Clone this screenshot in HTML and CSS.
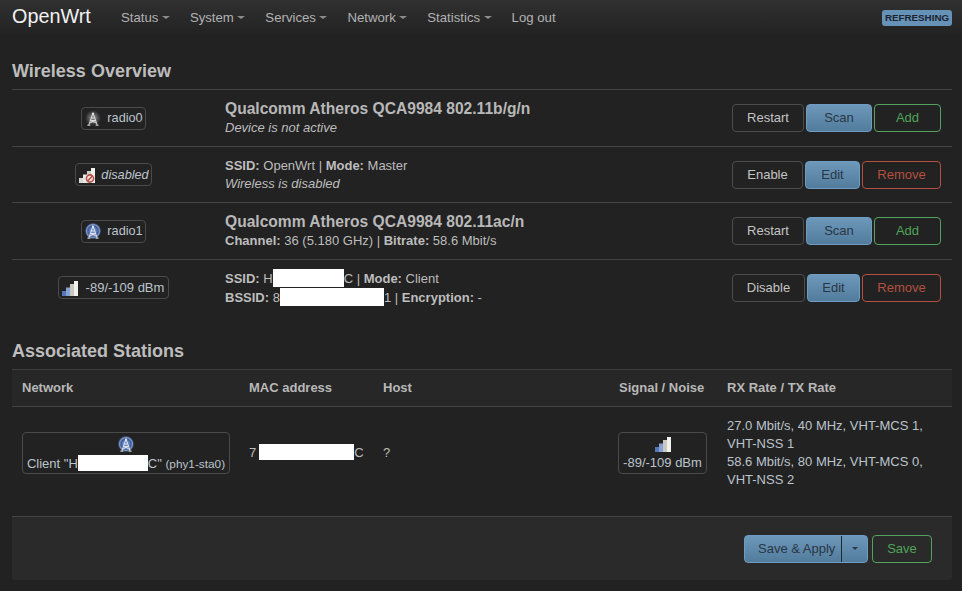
FILE: index.html
```html
<!DOCTYPE html>
<html lang="en">
<head>
<meta charset="utf-8">
<title>Wireless Overview - OpenWrt</title>
<link rel="stylesheet" href="styles.css">
</head>
<body>
<svg class="defs" width="0" height="0" aria-hidden="true">
  <defs>
    <radialGradient id="glowGrey"><stop offset="0.3" stop-color="#7a7a7a"/><stop offset="1" stop-color="#666" stop-opacity="0"/></radialGradient>
    <radialGradient id="glowBlue"><stop offset="0.35" stop-color="#6a8ccc"/><stop offset="0.62" stop-color="#3f5a92"/><stop offset="0.82" stop-color="#7a96cc"/><stop offset="1" stop-color="#4a6090" stop-opacity="0.3"/></radialGradient>
    <g id="tower" fill="none" stroke="#ececec" stroke-width="0.9">
      <path d="M8 3 3.8 15M8 3 12.2 15M6.3 8h3.4M5.6 10.6h4.8M4.8 13 10.4 10.6M11.2 13 5.6 10.6M2.4 15.2h3M10.6 15.2h3"/>
      <circle cx="8" cy="3.6" r="1" fill="#ececec" stroke="none"/>
    </g>
    <g id="bars">
      <rect x="0" y="11" width="4" height="5" fill="#5577b8"/>
      <rect x="4" y="7.5" width="4" height="8.5" fill="#86a2d2"/>
      <rect x="8" y="4" width="4" height="12" fill="#c9c9bf"/>
      <rect x="12" y="1" width="4" height="15" fill="#f2f2ec"/>
    </g>
    <g id="barsOff">
      <rect x="0" y="11" width="4" height="5" fill="#d8d8d2"/>
      <rect x="4" y="7.5" width="4" height="8.5" fill="#e8e8e2"/>
      <rect x="8" y="4" width="4" height="12" fill="#cfcfc8"/>
      <rect x="12" y="1" width="4" height="15" fill="#f2f2ec"/>
    </g>
  </defs>
</svg>
<header class="topbar">
  <a class="brand">OpenWrt</a>
  <nav class="menu">
    <a class="menu-item">Status<i class="caret"></i></a>
    <a class="menu-item">System<i class="caret"></i></a>
    <a class="menu-item">Services<i class="caret"></i></a>
    <a class="menu-item">Network<i class="caret"></i></a>
    <a class="menu-item">Statistics<i class="caret"></i></a>
    <a class="menu-item">Log out</a>
  </nav>
  <span class="refreshing">REFRESHING</span>
</header>
<main class="content">
  <h2 class="title title-first">Wireless Overview</h2>
  <section class="wifi">
    <div class="row">
      <div class="cell-badge"><span class="ifbadge"><svg class="ic" viewBox="0 0 16 16"><circle cx="8" cy="8" r="8" fill="url(#glowGrey)"/><use href="#tower"/></svg>radio0</span></div>
      <div class="cell-info"><div class="dev">Qualcomm Atheros QCA9984 802.11b/g/n</div><em>Device is not active</em></div>
      <div class="cell-act"><button class="btn btn-r1">Restart</button><button class="btn blue btn-s">Scan</button><button class="btn green btn-a">Add</button></div>
    </div>
    <div class="row">
      <div class="cell-badge"><span class="ifbadge"><svg class="ic ic-bars" viewBox="0 0 16 16"><use href="#barsOff"/><circle cx="11" cy="11.5" r="3.6" fill="#efe4e0" stroke="#b8504a" stroke-width="1.6"/><path d="M8.5 14 13.5 9" stroke="#b8504a" stroke-width="1.6"/></svg><em>disabled</em></span></div>
      <div class="cell-info plain"><div><b>SSID:</b> OpenWrt | <b>Mode:</b> Master</div><em>Wireless is disabled</em></div>
      <div class="cell-act"><button class="btn btn-en">Enable</button><button class="btn blue btn-e">Edit</button><button class="btn red btn-rm">Remove</button></div>
    </div>
    <div class="row">
      <div class="cell-badge"><span class="ifbadge"><svg class="ic" viewBox="0 0 16 16"><circle cx="8" cy="8" r="8" fill="url(#glowBlue)"/><use href="#tower"/></svg>radio1</span></div>
      <div class="cell-info"><div class="dev">Qualcomm Atheros QCA9984 802.11ac/n</div><div><b>Channel:</b> 36 (5.180 GHz) | <b>Bitrate:</b> 58.6 Mbit/s</div></div>
      <div class="cell-act"><button class="btn btn-r1">Restart</button><button class="btn blue btn-s">Scan</button><button class="btn green btn-a">Add</button></div>
    </div>
    <div class="row">
      <div class="cell-badge"><span class="ifbadge sigbadge"><svg class="ic ic-bars" viewBox="0 0 16 16"><use href="#bars"/></svg>-89/-109 dBm</span></div>
      <div class="cell-info plain"><div><b>SSID:</b> H<span class="mask m-ssid"></span>C | <b>Mode:</b> Client</div><div><b>BSSID:</b> 8<span class="mask m-bssid"></span>1 | <b>Encryption:</b> -</div></div>
      <div class="cell-act"><button class="btn btn-dis">Disable</button><button class="btn blue btn-e2">Edit</button><button class="btn red btn-rm">Remove</button></div>
    </div>
  </section>
  <h2 class="title title-second">Associated Stations</h2>
  <section class="stations">
    <div class="st-row st-head">
      <div>Network</div><div>MAC address</div><div>Host</div><div>Signal / Noise</div><div>RX Rate / TX Rate</div>
    </div>
    <div class="st-row st-body">
      <div><span class="stack net"><svg class="ic" viewBox="0 0 16 16"><circle cx="8" cy="8" r="8" fill="url(#glowBlue)"/><use href="#tower"/></svg><span class="nowrap">Client "H<span class="mask m-net"></span>C" <small>(phy1-sta0)</small></span></span></div>
      <div>7<span class="mask m-mac"></span>C</div>
      <div>?</div>
      <div class="sig-cell"><span class="stack sig"><svg class="ic" viewBox="0 0 16 16"><use href="#bars"/></svg><span class="nowrap">-89/-109 dBm</span></span></div>
      <div class="rates">27.0 Mbit/s, 40 MHz, VHT-MCS 1, VHT-NSS 1<br>58.6 Mbit/s, 80 MHz, VHT-MCS 0, VHT-NSS 2</div>
    </div>
  </section>
  <footer class="actions">
    <div class="split"><span class="split-main">Save &amp; Apply</span><span class="split-arrow"><i class="caret dark"></i></span></div>
    <button class="btn green btn-save">Save</button>
  </footer>
</main>
</body>
</html>
```
FILE: styles.css
```css
* { box-sizing: border-box; }
html, body { margin: 0; height: 591px; overflow: hidden; }
body { background: #222; color: #bdbdbd; font: 13px/18px "Liberation Sans", Arial, sans-serif; }
.defs { position: absolute; }
em { font-style: italic; }
b { font-weight: bold; }
.nowrap { white-space: nowrap; }

.topbar { height: 36px; display: flex; align-items: center; padding: 0 10px 0 12px; background: linear-gradient(#303030, #222); }
.brand { color: #f2f2f2; font-size: 19.8px; line-height: 24px; width: 109px; margin-top: -4px; }
.menu { display: flex; gap: 20px; flex: 1; margin-top: -1px; color: #b2b2b2; font-size: 13.2px; }
.menu-item { display: flex; align-items: center; }
.caret { display: inline-block; width: 0; height: 0; margin-left: 3.5px; border-style: solid; border-width: 3px 4px 0; border-color: #8c8c8c transparent transparent; }
.refreshing { background: #6792b8; color: #1c2430; font-size: 9.8px; font-weight: bold; line-height: 16px; height: 16px; width: 70px; text-align: center; border-radius: 3px; }

.content { padding: 0 10px 0 12px; }
.title { margin: 0; color: #bdbdbd; font-size: 18px; font-weight: bold; line-height: 22px; }
.title-first { padding-top: 24px; height: 53px; }
.title-second { margin-top: 24px; height: 22px; }

.wifi { border-top: 1px solid #444; }
.row { display: grid; grid-template-columns: 203px 1fr auto; align-items: center; height: 56.5px; border-bottom: 1px solid #444; }
.row:last-child { border-bottom: 1px solid transparent; }
.cell-badge { display: flex; justify-content: center; padding-top: 1px; }
.ifbadge { display: inline-flex; align-items: center; gap: 6px; height: 23px; padding: 0 2px 0 3px; border: 1px solid #4a4a4a; border-radius: 4px; color: #bcc4cc; font-size: 12.7px; }
.sigbadge { font-size: 13px; gap: 8px; padding: 0 4px 0 3px; }
.ic { width: 16px; height: 16px; flex: none; }
.cell-info { padding-left: 10px; font-size: 13px; line-height: 18px; color: #bdbdbd; }
.cell-info.plain { padding-top: 1px; }
.dev { font-size: 15.6px; font-weight: bold; line-height: 20px; color: #b8b8b8; }
.cell-act { display: flex; gap: 2px; padding: 1px 11px 0 0; justify-content: flex-end; }
.btn { height: 28px; padding: 0; background: transparent; border: 1px solid #4c4c4c; border-radius: 4px; color: #c4c4c4; font: 13px/26px "Liberation Sans", Arial, sans-serif; }
.btn.blue { background: linear-gradient(#6d98ba, #527c9c); border-color: #6f9cc2; color: #2a3644; }
.btn.green { border-color: #53a35c; color: #4fa458; }
.btn.red { border-color: #b4503f; color: #b5503f; }
.btn-r1 { width: 72px; }
.btn-s { width: 66px; }
.btn-a { width: 67px; }
.btn-en { width: 71px; }
.btn-e { width: 55px; }
.btn-e2 { width: 53px; }
.btn-rm { width: 79px; }
.btn-dis { width: 73px; }
.mask { display: inline-block; background: #fff; height: 18px; vertical-align: -4px; }
.m-ssid { width: 71px; }
.m-bssid { width: 104px; }
.m-net { width: 70px; height: 16px; vertical-align: -3px; }
.m-mac { width: 95px; height: 16px; vertical-align: -3px; margin-left: 3px; }

.stations { margin-top: 7px; }
.st-row { display: grid; grid-template-columns: 227px 134px 236px 108px 1fr; }
.st-head { height: 38px; align-items: center; border-top: 1px solid #3e3e3e; border-bottom: 1px solid #444; font-weight: bold; font-size: 13px; background: #272727; color: #b8b8b8; }
.st-head > div { padding-left: 10px; }
.st-body { height: 109px; padding: 10px 0 27px; align-items: center; font-size: 13px; }
.st-body > div { padding-left: 10px; }
.st-body > .sig-cell { padding-left: 9px; }
.stack { display: inline-flex; flex-direction: column; align-items: center; gap: 3px; border: 1px solid #4a4a4a; border-radius: 4px; color: #bcc4cc; font-size: 13px; line-height: 16px; padding: 3px 2px; height: 42px; }
.st-body small { font-size: 11.8px; }
.net { width: 208px; }
.sig { width: 89px; }
.st-body > div.rates { line-height: 18px; color: #bcc4cc; }
.actions { height: 64px; border-top: 1px solid #444; background: #2a2a2a; border-radius: 0 0 3px 3px; display: flex; justify-content: flex-end; align-items: center; gap: 4px; padding-right: 20px; }
.split { display: flex; height: 28px; border: 1px solid #6f9cc2; border-radius: 4px; background: linear-gradient(#6d98ba, #527c9c); color: #2a3644; line-height: 26px; }
.split-main { width: 97px; padding-left: 13px; border-right: 1px solid #1e2830; }
.split-arrow { width: 25px; display: flex; align-items: center; justify-content: center; }
.caret.dark { margin: 0; border-width: 3px 3px 0; border-top-color: #2a3644; }
.btn-save { width: 60px; }
```
